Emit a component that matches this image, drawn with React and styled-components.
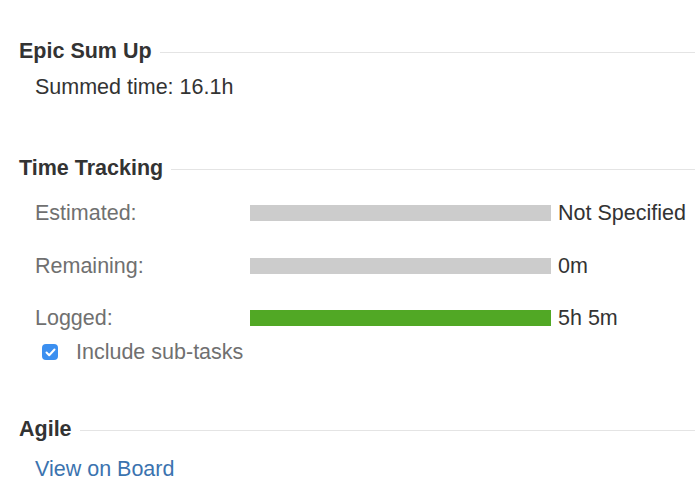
import React from "react";
import styled, { createGlobalStyle } from "styled-components";

const Global = createGlobalStyle`
  html, body { margin: 0; padding: 0; background: #fff; }
  body { font-family: "Liberation Sans", Arial, sans-serif; color: #333; }
`;

const Page = styled.div`
  padding: 38px 0 0 19px;
  width: 676px;
`;

const Section = styled.section`
  margin-bottom: ${(p) => p.$gap || 0}px;
`;

const Heading = styled.div`
  display: flex;
  align-items: center;
  gap: 8px;
  height: 26px;
  font-size: 21.5px;
  font-weight: bold;
  color: #333;
  &::after {
    content: "";
    flex: 1;
    height: 1px;
    background: #e4e4e4;
    margin-top: 2px;
  }
`;

const Body = styled.div`
  padding-left: 16px;
  font-size: 21.5px;
  line-height: 26px;
`;

const Plain = styled.div`
  margin-top: 10px;
  color: #333;
`;

const Rows = styled.div`
  margin-top: 19px;
  display: flex;
  flex-direction: column;
  gap: 26.5px;
`;

const Row = styled.div`
  display: flex;
  align-items: center;
  height: 26px;
`;

const Label = styled.div`
  width: 215px;
  color: #707070;
`;

const Bar = styled.div`
  width: 301px;
  height: 16px;
  background: ${(p) => p.$color};
`;

const Value = styled.div`
  margin-left: 7px;
  color: #333;
  white-space: nowrap;
`;

const Check = styled.label`
  display: flex;
  align-items: center;
  gap: 18px;
  margin-top: 8px;
  padding-left: 7px;
  color: #707070;
`;

const Box = styled.span`
  width: 16px;
  height: 16px;
  border-radius: 4px;
  background: #3b8ff0;
  display: flex;
  align-items: center;
  justify-content: center;
`;

const Link = styled.a`
  display: block;
  margin-top: 14px;
  color: #3b73af;
  text-decoration: none;
`;

export default function App() {
  return (
    <>
      <Global />
      <Page>
        <Section $gap={55}>
          <Heading>Epic Sum Up</Heading>
          <Body>
            <Plain>Summed time: 16.1h</Plain>
          </Body>
        </Section>
        <Section $gap={51}>
          <Heading>Time Tracking</Heading>
          <Body>
            <Rows>
              <Row>
                <Label>Estimated:</Label>
                <Bar $color="#cccccc" />
                <Value>Not Specified</Value>
              </Row>
              <Row>
                <Label>Remaining:</Label>
                <Bar $color="#cccccc" />
                <Value>0m</Value>
              </Row>
              <Row>
                <Label>Logged:</Label>
                <Bar $color="#51a825" />
                <Value>5h 5m</Value>
              </Row>
            </Rows>
            <Check>
              <Box>
                <svg width="11" height="9" viewBox="0 0 11 9">
                  <path d="M1.5 4.5 L4.2 7.2 L9.5 1.5" fill="none" stroke="#fff" strokeWidth="2" strokeLinecap="round" strokeLinejoin="round" />
                </svg>
              </Box>
              Include sub-tasks
            </Check>
          </Body>
        </Section>
        <Section>
          <Heading>Agile</Heading>
          <Body>
            <Link href="#">View on Board</Link>
          </Body>
        </Section>
      </Page>
    </>
  );
}
